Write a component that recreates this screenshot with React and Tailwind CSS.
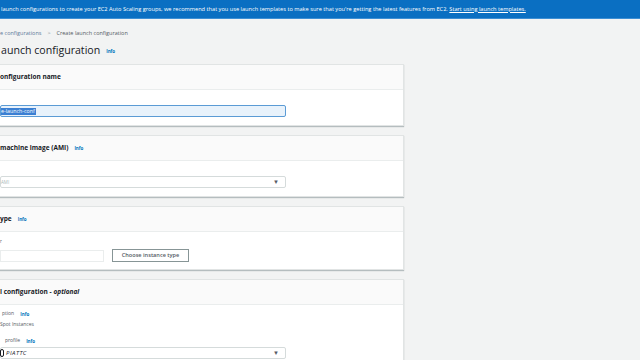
import React from 'react';

const Info = () => (
  <span className="text-[4.5px] font-bold text-[#0073bb] ml-[6px]">Info</span>
);

const Caret = () => (
  <span className="text-[6px] text-[#545b64] leading-none">▼</span>
);

const Panel = ({ title, children, bodyClass }) => (
  <div className="w-[405px] -ml-px bg-white border border-[#e1e4e4] shadow-[0_1px_1px_rgba(0,28,36,0.25)]">
    <div className="h-[25px] flex items-center bg-[#fafafa] border-b border-[#eaeded] text-[6.5px] font-bold text-[#16191f]">
      {title}
    </div>
    <div className={bodyClass}>{children}</div>
  </div>
);

export default function App() {
  return (
    <div
      className="w-[640px] h-[360px] overflow-hidden bg-[#f2f3f3] flex flex-col"
      style={{ fontFamily: '"Open Sans", "Noto Sans", sans-serif' }}
    >
      <div className="h-[19px] shrink-0 bg-[#0a6fc2] border-b border-[#3d8fd4] flex items-center text-[5.65px] text-white whitespace-nowrap pl-px">
        <span>
          launch configurations to create your EC2 Auto Scaling groups, we recommend that you use launch templates to make sure that you're getting the latest features from EC2.{' '}
          <span className="underline">Start using launch templates.</span>
        </span>
      </div>

      <div className="mt-[10px] h-[8px] flex items-center text-[5.5px] text-[#545b64] whitespace-nowrap">
        <span className="text-[#5d7a99]">e configurations</span>
        <span className="mx-[6px] text-[#879596]">&gt;</span>
        <span>Create launch configuration</span>
      </div>

      <div className="mt-[7px] h-[14px] flex items-center whitespace-nowrap">
        <span className="text-[10.6px] text-[#16191f] pl-px">aunch configuration</span>
        <Info />
      </div>

      <div className="mt-[6px] flex flex-col gap-[9px]">
        <Panel title="onfiguration name" bodyClass="h-[35px] pt-[15px]">
          <div className="w-[286px] h-[12px] bg-[#e8f2fb] border border-[#5b9bd5] rounded-[2px] flex items-center">
            <span className="bg-[#3b7fd3] text-white text-[5.3px] leading-[7px] pr-px">e-launch-conf</span>
          </div>
        </Panel>

        <Panel
          title={<><span>machine image (AMI)</span><Info /></>}
          bodyClass="h-[35px] pt-[15px]"
        >
          <div className="w-[286px] h-[12px] bg-white border border-[#d5dbdb] rounded-[2px] flex items-center justify-between pr-[6px]">
            <span className="text-[4.5px] text-[#aab7b8]">AMI</span>
            <Caret />
          </div>
        </Panel>

        <Panel
          title={<><span>ype</span><Info /></>}
          bodyClass="h-[37px] pt-[6px]"
        >
          <div className="text-[4.5px] text-[#545b64] leading-[6px]">r</div>
          <div className="mt-[5px] flex items-center gap-[8px]">
            <div className="w-[104px] h-[12px] bg-white border border-[#eaeded]" />
            <div className="w-[77px] h-[13px] border border-[#879596] bg-white flex items-center justify-center text-[5.6px] font-semibold text-[#545b64]">
              Choose instance type
            </div>
          </div>
        </Panel>

        <Panel
          title={<><span>l configuration - </span><span className="italic ml-[2px]">optional</span></>}
          bodyClass="h-[80px] pt-[5px]"
        >
          <div className="flex items-center h-[8px] text-[5px] text-[#545b64] pl-[2px]">
            <span>ption</span>
            <Info />
          </div>
          <div className="h-[8px] mt-[3px] flex items-center text-[5px] text-[#545b64]">
            <span>Spot Instances</span>
          </div>
          <div className="h-[8px] mt-[8px] flex items-center text-[5px] text-[#545b64] pl-[5px]">
            <span>profile</span>
            <Info />
          </div>
          <div className="mt-[2px] w-[286px] h-[12px] bg-white border border-[#d5dbdb] rounded-[2px] flex items-center justify-between pr-[6px]">
            <div className="flex items-center">
              <span className="w-[4px] h-[8px] rounded-full border border-[#16191f] -ml-[1px]" />
              <span className="text-[6px] italic text-[#16191f] ml-[2px] tracking-[0.5px]">PIATTC</span>
            </div>
            <Caret />
          </div>
        </Panel>
      </div>
    </div>
  );
}
